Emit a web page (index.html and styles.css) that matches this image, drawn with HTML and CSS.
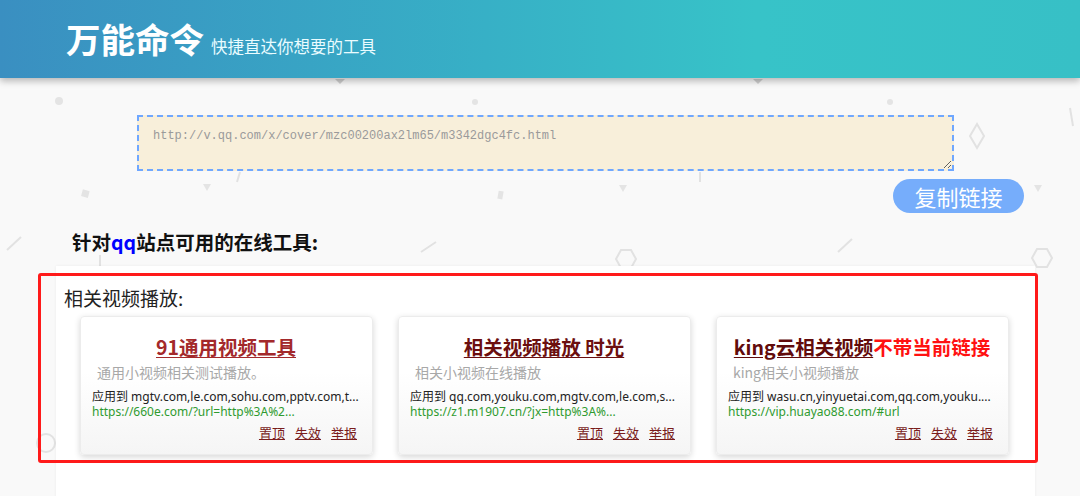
FILE: index.html
```html
<!DOCTYPE html>
<html lang="zh-CN">
<head>
<meta charset="utf-8">
<title>万能命令</title>
<link rel="stylesheet" href="styles.css">
</head>
<body>
<svg class="deco" width="1080" height="496" viewBox="0 0 1080 496" aria-hidden="true">
  <g fill="#e4e4e4" stroke="none">
    <circle cx="59" cy="101" r="4"/>
    <circle cx="890" cy="102" r="3"/>
    <circle cx="475" cy="102" r="3"/>
    <rect x="82" y="190" width="7" height="7" transform="rotate(15 85 193)"/>
    <rect x="498" y="191" width="5" height="8" transform="rotate(10 500 195)"/>
    <polygon points="203,184 211,184 207,191"/>
    <polygon points="619,185 627,185 623,192"/>
    <polygon points="1034,185 1042,185 1038,192"/>
    <polygon points="335,79 345,79 340,84" fill="#cfcfcf"/>
    <polygon points="753,79 763,79 758,84" fill="#cfcfcf"/>
  </g>
  <g fill="none" stroke="#e2e2e2" stroke-width="2">
    <polygon points="977,124 984,136 977,148 970,136"/>
    <line x1="7" y1="250" x2="21" y2="237"/>
    <line x1="421" y1="252" x2="436" y2="242"/>
    <line x1="838" y1="252" x2="852" y2="239"/>
    <line x1="1070" y1="108" x2="1073" y2="126"/>
    <line x1="700" y1="172" x2="700" y2="182"/>
    <line x1="240" y1="172" x2="237" y2="182"/>
    <line x1="100" y1="255" x2="100" y2="266"/>
    <polygon points="636,259 631,268 621,268 616,259 621,250 631,250"/>
    <polygon points="1052,258 1047,267 1037,267 1032,258 1037,249 1047,249"/>
    <circle cx="46" cy="443" r="9"/>
  </g>
</svg>

<header class="top">
  <div class="brand">
    <h1 class="logo">万能命令</h1>
    <span class="slogan">快捷直达你想要的工具</span>
  </div>
</header>

<main class="wrap">
  <div class="input-area">
    <textarea class="link-box" placeholder="http://v.qq.com/x/cover/mzc00200ax2lm65/m3342dgc4fc.html"></textarea>
    <div class="btn-row"><button class="copy-btn" type="button">复制链接</button></div>
  </div>

  <h2 class="site-title">针对<span class="qq">qq</span>站点可用的在线工具:</h2>

  <section class="panel">
    <div class="group">
      <h3 class="group-title">相关视频播放:</h3>
      <div class="cards">
        <div class="card">
          <div class="card-title"><a class="t1" href="#">91通用视频工具</a></div>
          <div class="card-desc">通用小视频相关测试播放。</div>
          <div class="card-apply">应用到 mgtv.com,le.com,sohu.com,pptv.com,t...</div>
          <div class="card-url">https://660e.com/?url=http%3A%2...</div>
          <div class="card-actions"><a href="#">置顶</a><a href="#">失效</a><a href="#">举报</a></div>
        </div>
        <div class="card">
          <div class="card-title"><a class="t2" href="#">相关视频播放 时光</a></div>
          <div class="card-desc">相关小视频在线播放</div>
          <div class="card-apply">应用到 qq.com,youku.com,mgtv.com,le.com,s...</div>
          <div class="card-url">https://z1.m1907.cn/?jx=http%3A%...</div>
          <div class="card-actions"><a href="#">置顶</a><a href="#">失效</a><a href="#">举报</a></div>
        </div>
        <div class="card">
          <div class="card-title"><a class="t3" href="#">king云相关视频</a><span class="warn">不带当前链接</span></div>
          <div class="card-desc">king相关小视频播放</div>
          <div class="card-apply">应用到 wasu.cn,yinyuetai.com,qq.com,youku....</div>
          <div class="card-url">https://vip.huayao88.com/#url</div>
          <div class="card-actions"><a href="#">置顶</a><a href="#">失效</a><a href="#">举报</a></div>
        </div>
      </div>
    </div>
  </section>
</main>
</body>
</html>
```

FILE: styles.css
```css
* { box-sizing: border-box; }

html, body {
  margin: 0;
  padding: 0;
}

body {
  position: relative;
  width: 1080px;
  height: 496px;
  overflow: hidden;
  background: #f9f9f9;
  font-family: "Noto Sans", "Noto Sans CJK SC", sans-serif;
  color: #222;
}

.deco {
  position: absolute;
  left: 0;
  top: 0;
  z-index: 0;
}

.top {
  position: relative;
  z-index: 2;
  height: 78px;
  padding-left: 66px;
  background: linear-gradient(90deg, #3a8fc1 0%, #37b0c6 45%, #37c3c8 70%, #37c0c6 100%);
  box-shadow: 0 3px 7px rgba(0, 0, 0, 0.28);
  display: flex;
  align-items: center;
}

.brand {
  display: flex;
  align-items: baseline;
  gap: 7px;
  margin-top: -2px;
}

.logo {
  margin: 0;
  font-family: "Noto Sans CJK SC", sans-serif;
  font-size: 34.5px;
  font-weight: 700;
  color: #fff;
  line-height: 40px;
}

.slogan {
  font-family: "Noto Sans CJK SC", sans-serif;
  font-size: 16.5px;
  color: #eafcff;
}

.wrap {
  position: relative;
  z-index: 1;
  margin-left: 56px;
  width: 979px;
}

.input-area {
  padding-top: 37px;
}

.link-box {
  display: block;
  margin-left: 81px;
  width: 817px;
  height: 56px;
  padding: 12px 14px 8px;
  background: #f8efda;
  border: 2px dashed #6fa7ff;
  border-radius: 0;
  resize: vertical;
  outline: none;
  font-family: "Liberation Mono", monospace;
  font-size: 12px;
  color: #999;
}

.link-box::placeholder {
  color: #9a9a9a;
}

.btn-row {
  display: flex;
  justify-content: flex-end;
  padding-right: 11px;
  margin-top: 8px;
}

.copy-btn {
  width: 131px;
  height: 34px;
  border: none;
  border-radius: 17px;
  background: #76adfb;
  color: #fff;
  font-family: "Noto Sans CJK SC", sans-serif;
  font-size: 22px;
  line-height: 34px;
  padding: 0;
}

.site-title {
  margin: 16px 0 0 0;
  padding-left: 16px;
  font-family: "Noto Sans CJK SC", sans-serif;
  font-size: 19.5px;
  font-weight: 700;
  line-height: 26px;
  color: #111;
}

.qq {
  color: #0000ff;
}

.panel {
  margin-top: 11px;
  background: #fff;
  height: 240px;
  padding-top: 7px;
  box-shadow: 0 0 3px rgba(0, 0, 0, 0.06);
}

.group {
  margin-left: -18px;
  margin-right: -3px;
  border: 3px solid #ff1a1a;
  border-radius: 3px;
  padding: 10px 0 5px 23px;
}

.group-title {
  margin: 0;
  font-family: "Noto Sans CJK SC", sans-serif;
  font-size: 19px;
  font-weight: 400;
  line-height: 24px;
  color: #222;
}

.cards {
  margin-top: 6px;
  margin-left: 16px;
  display: grid;
  grid-template-columns: repeat(3, 293px);
  gap: 25px;
}

.card {
  height: 139px;
  padding: 17px 8px 0 11px;
  background: linear-gradient(180deg, #ffffff 0%, #ffffff 40%, #f5f5f5 100%);
  border: 1px solid #ececec;
  border-radius: 4px;
  box-shadow: 0 2px 6px rgba(0, 0, 0, 0.16);
}

.card-title {
  text-align: center;
  font-family: "Noto Sans CJK SC", sans-serif;
  font-size: 19.5px;
  font-weight: 700;
  line-height: 26px;
  white-space: nowrap;
  padding-right: 4px;
}

.card-title a {
  text-decoration: underline;
  text-underline-offset: 2px;
}

.t1 { color: #a3292b; }
.t2 { color: #6c0f0f; }
.t3 { color: #620b0b; }

.warn {
  color: #ff1111;
}

.card-desc {
  margin-top: 1px;
  padding-left: 5px;
  font-family: "Noto Sans CJK SC", sans-serif;
  font-size: 14px;
  line-height: 22px;
  color: #a8a8a8;
  white-space: nowrap;
}

.card-apply {
  margin-top: 6px;
  font-size: 12px;
  line-height: 15px;
  color: #222;
  white-space: nowrap;
}

.card-url {
  font-size: 12px;
  line-height: 15px;
  color: #2f9a2f;
  white-space: nowrap;
}

.card-actions {
  margin-top: 5px;
  padding-right: 7px;
  display: flex;
  justify-content: flex-end;
  gap: 10px;
  font-family: "Noto Sans CJK SC", sans-serif;
  font-size: 13px;
  line-height: 18px;
}

.card-actions a {
  color: #7a1c1c;
  text-decoration: underline;
}
```
